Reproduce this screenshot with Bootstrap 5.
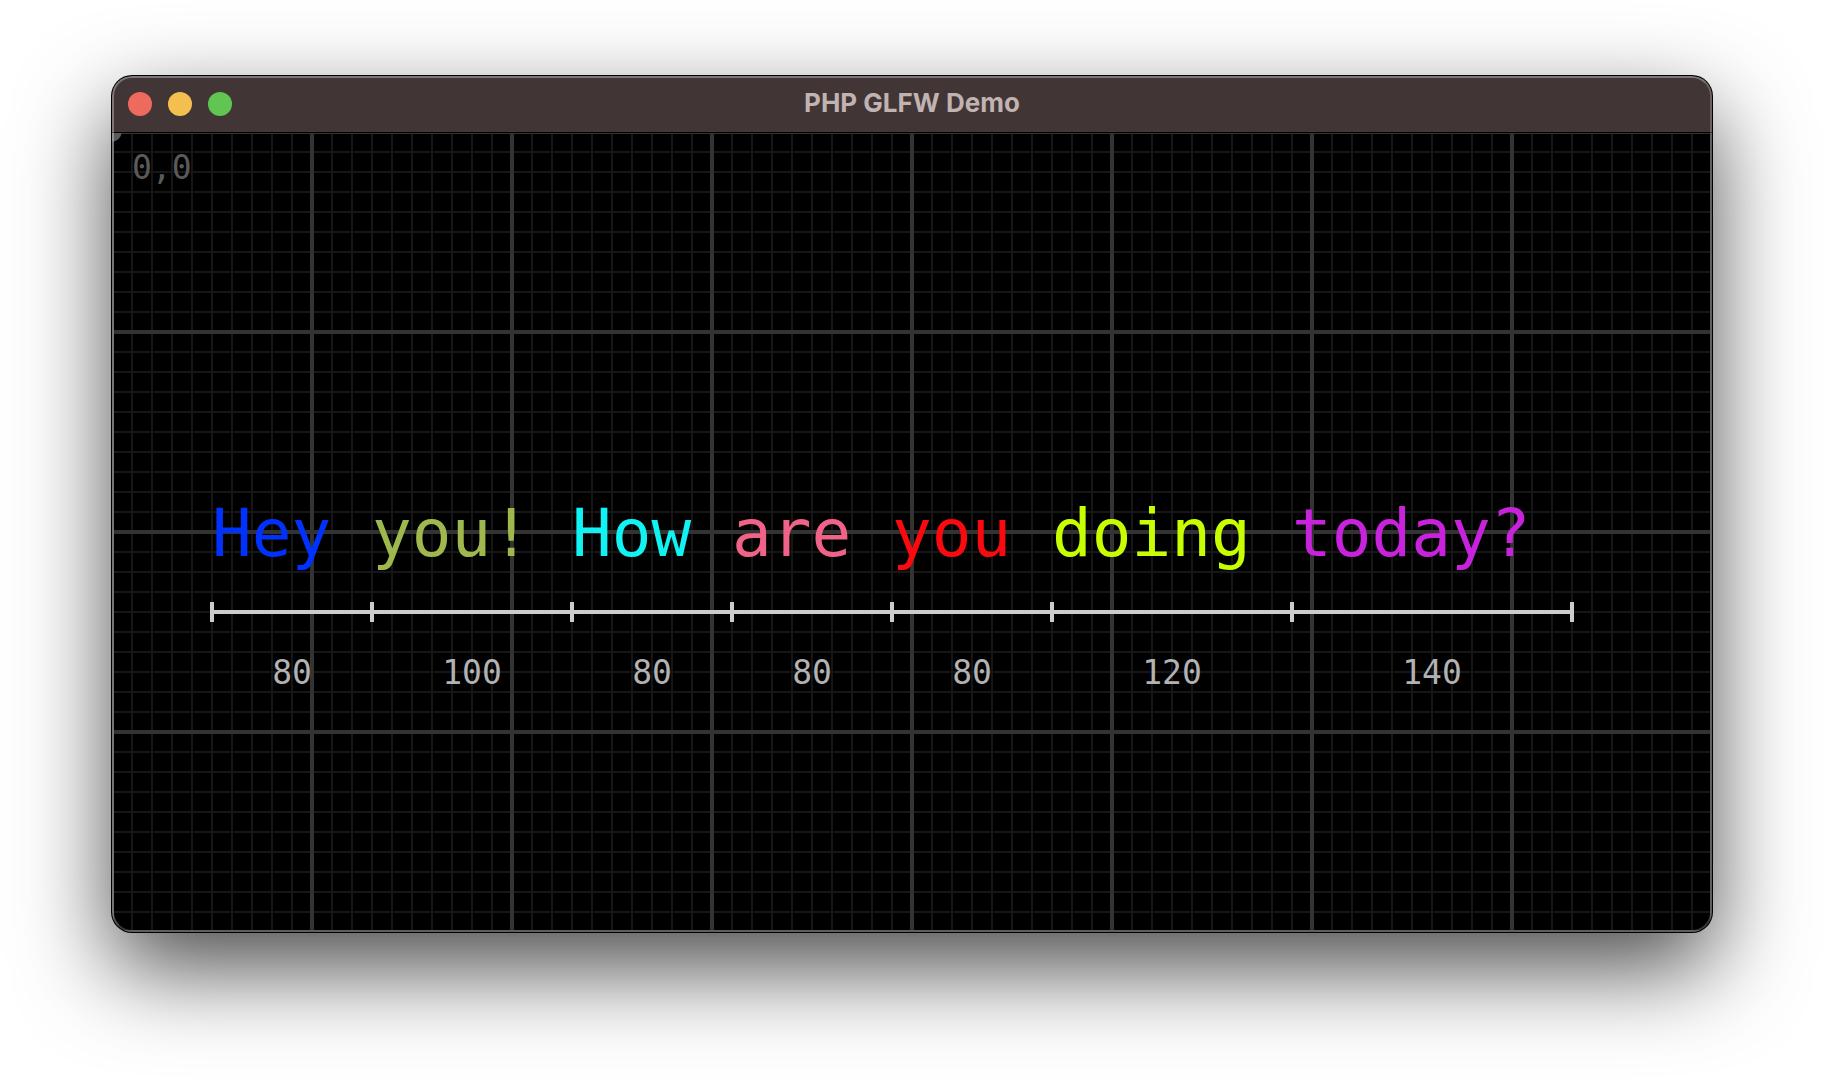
<!DOCTYPE html>
<html lang="en">
<head>
<meta charset="utf-8">
<meta name="viewport" content="width=device-width, initial-scale=1">
<title>PHP GLFW Demo</title>
<link href="https://cdn.jsdelivr.net/npm/bootstrap@5.3.0/dist/css/bootstrap.min.css" rel="stylesheet">
<style>
body { background: #fff; }
.desk { padding: 76px 112px 148px; }
.app-window {
  border-radius: 20px;
  background: #000;
  box-shadow: 0 0 0 1px #000, 0 36px 92px rgba(0, 0, 0, .71);
}
/* Light rim drawn over the window's edge */
.app-window::after {
  content: "";
  position: absolute;
  inset: 0;
  border-radius: inherit;
  border: 2px solid rgba(255, 255, 255, .22);
  border-top-color: rgba(255, 255, 255, .32);
  border-left-color: rgba(255, 255, 255, .32);
  pointer-events: none;
}
.title-bar {
  display: grid;
  grid-template-columns: 1fr auto 1fr;
  height: 56px;
  padding: 0 16px;
  background: #413635;
}
.title-text {
  padding-bottom: 2px;
  font: 700 26px/32px Inter, "Liberation Sans", sans-serif;
  color: #c0b3b1;
}
.light { width: 24px; height: 24px; border: 0; border-radius: 50%; padding: 0; }
.light-close { background: #ed6a5e; }
.light-min { background: #f5bf4f; }
.light-max { background: #61c554; }
.scene {
  aspect-ratio: 2 / 1;
  padding: 15px 140px 0 100px;
  border-top: 1px solid #000;
  font-family: "DejaVu Sans Mono", monospace;
  background-color: #000;
  background-origin: border-box;
  background-image:
    radial-gradient(circle at 0 0, #5a5a5a 9px, transparent 10px),
    linear-gradient(90deg, #333 2px, transparent 2px 198px, #333 198px),
    linear-gradient(#333 2px, transparent 2px 198px, #333 198px),
    linear-gradient(90deg, #161616 1px, transparent 1px 19px, #161616 19px),
    linear-gradient(#161616 1px, transparent 1px 19px, #161616 19px);
  background-size: auto, 200px 200px, 200px 200px, 20px 20px, 20px 20px;
  background-repeat: no-repeat, repeat, repeat, repeat, repeat;
}
.origin { margin-left: -80px; font-size: 33px; line-height: 40px; color: #5a5a5a; }
.phrase { margin-top: 306px; }
.seg { flex-basis: 0; min-width: 0; }
.word { font-size: 66px; line-height: 80px; white-space: nowrap; }
/* Ruler: a 4px line with a tick at each segment boundary */
.ruler {
  height: 20px;
  margin: 28px -2px 31px;
  border: solid #ccc;
  border-width: 0 4px;
  background: linear-gradient(#ccc, #ccc) center / 100% 4px no-repeat;
}
.measure { font-size: 33px; line-height: 40px; color: #b2b2b2; }
.s80 { flex-grow: 80; }
.s100 { flex-grow: 100; }
.s120 { flex-grow: 120; }
.s140 { flex-grow: 140; }
.c-blue { color: #0032ff; }
.c-olive { color: #9fb84d; }
.c-cyan { color: #11f2f2; }
.c-pink { color: #f06287; }
.c-red { color: #fa0a0f; }
.c-lime { color: #c8ff00; }
.c-purple { color: #c822dc; }
</style>
</head>
<body>
<main class="desk">
  <section class="app-window position-relative overflow-hidden" aria-label="PHP GLFW Demo">
    <header class="title-bar align-items-center">
      <div class="d-flex gap-3">
        <button type="button" class="light light-close" aria-label="Close"></button>
        <button type="button" class="light light-min" aria-label="Minimize"></button>
        <button type="button" class="light light-max" aria-label="Zoom"></button>
      </div>
      <h1 class="title-text m-0">PHP GLFW Demo</h1>
    </header>
    <div class="scene">
      <div class="origin">0,0</div>
      <div class="phrase d-flex">
        <div class="seg s80"><div class="word c-blue">Hey</div><div class="ruler"></div><div class="measure text-center">80</div></div>
        <div class="seg s100"><div class="word c-olive">you!</div><div class="ruler"></div><div class="measure text-center">100</div></div>
        <div class="seg s80"><div class="word c-cyan">How</div><div class="ruler"></div><div class="measure text-center">80</div></div>
        <div class="seg s80"><div class="word c-pink">are</div><div class="ruler"></div><div class="measure text-center">80</div></div>
        <div class="seg s80"><div class="word c-red">you</div><div class="ruler"></div><div class="measure text-center">80</div></div>
        <div class="seg s120"><div class="word c-lime">doing</div><div class="ruler"></div><div class="measure text-center">120</div></div>
        <div class="seg s140"><div class="word c-purple">today?</div><div class="ruler"></div><div class="measure text-center">140</div></div>
      </div>
    </div>
  </section>
</main>
<script src="https://cdn.jsdelivr.net/npm/bootstrap@5.3.0/dist/js/bootstrap.bundle.min.js"></script>
</body>
</html>
